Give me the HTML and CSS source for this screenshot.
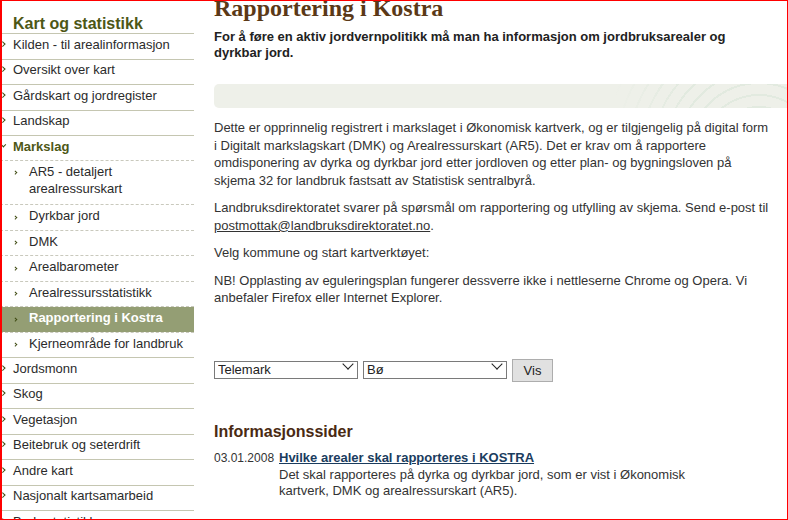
FILE: index.html
```html
<!DOCTYPE html>
<html lang="no">
<head>
<meta charset="utf-8">
<title>Rapportering i Kostra</title>
<link rel="stylesheet" href="styles.css">
</head>
<body>
<div class="page">
  <nav class="side">
    <h2 class="side-title">Kart og statistikk</h2>
    <ul class="menu">
      <li><a href="#">Kilden - til arealinformasjon</a></li>
      <li><a href="#">Oversikt over kart</a></li>
      <li><a href="#">Gårdskart og jordregister</a></li>
      <li><a href="#">Landskap</a></li>
      <li class="open"><a href="#">Markslag</a>
        <ul class="sub">
          <li class="multi"><a href="#">AR5 - detaljert arealressurskart</a></li>
          <li><a href="#">Dyrkbar jord</a></li>
          <li><a href="#">DMK</a></li>
          <li><a href="#">Arealbarometer</a></li>
          <li><a href="#">Arealressursstatistikk</a></li>
          <li class="active"><a href="#">Rapportering i Kostra</a></li>
          <li><a href="#">Kjerneområde for landbruk</a></li>
        </ul>
      </li>
      <li><a href="#">Jordsmonn</a></li>
      <li><a href="#">Skog</a></li>
      <li><a href="#">Vegetasjon</a></li>
      <li><a href="#">Beitebruk og seterdrift</a></li>
      <li><a href="#">Andre kart</a></li>
      <li><a href="#">Nasjonalt kartsamarbeid</a></li>
      <li><a href="#">Bruksstatistikk</a></li>
    </ul>
  </nav>
  <main class="main">
    <h1 class="title">Rapportering i Kostra</h1>
    <p class="lead">For å føre en aktiv jordvernpolitikk må man ha informasjon om jordbruksarealer og dyrkbar jord.</p>
    <div class="banner"></div>
    <p class="text first">Dette er opprinnelig registrert i markslaget i Økonomisk kartverk, og er tilgjengelig på digital form i Digitalt markslagskart (DMK) og Arealressurskart (AR5). Det er krav om å rapportere omdisponering av dyrka og dyrkbar jord etter jordloven og etter plan- og bygningsloven på skjema 32 for landbruk fastsatt av Statistisk sentralbyrå.</p>
    <p class="text">Landbruksdirektoratet svarer på spørsmål om rapportering og utfylling av skjema. Send e-post til <a class="mail" href="#">postmottak@landbruksdirektoratet.no</a>.</p>
    <p class="text">Velg kommune og start kartverktøyet:</p>
    <p class="text">NB! Opplasting av eguleringsplan fungerer dessverre ikke i nettleserne Chrome og Opera. Vi anbefaler Firefox eller Internet Explorer.</p>
    <form class="picker">
      <span class="sel"><select><option>Telemark</option></select></span>
      <span class="sel"><select><option>Bø</option></select></span>
      <button type="button" class="btn">Vis</button>
    </form>
    <h2 class="info">Informasjonssider</h2>
    <div class="news">
      <span class="date">03.01.2008</span>
      <div class="news-body">
        <a class="news-link" href="#">Hvilke arealer skal rapporteres i KOSTRA</a>
        <div class="news-desc">Det skal rapporteres på dyrka og dyrkbar jord, som er vist i Økonomisk kartverk, DMK og arealressurskart (AR5).</div>
      </div>
    </div>
  </main>
</div>
<div class="frame"></div>
</body>
</html>
```
FILE: styles.css
```css
* { box-sizing: border-box; }
html, body { margin: 0; overflow: hidden; background: #fff; }
body {
  font-family: "Liberation Sans", Arial, sans-serif;
  font-size: 13px;
  color: #333;
}
.page { display: flex; gap: 20px; }

/* Sidebar */
.side { width: 194px; flex: none; }
.side-title {
  margin: 14px 0 0;
  padding-left: 13px;
  font-size: 16px;
  line-height: 19px;
  font-weight: bold;
  color: #4d5716;
  border-bottom: 1px solid #c5c6b1;
}
.menu { list-style: none; margin: 0; padding: 0; }
.menu > li { border-bottom: 1px solid #c5c6b1; }
.menu a { color: #2b2b2b; text-decoration: none; }
.menu > li > a {
  display: block;
  position: relative;
  padding: 2.5px 0 6px 13px;
  line-height: 16px;
}
.menu > li > a::before {
  content: "";
  position: absolute;
  left: 0.5px;
  top: 7.7px;
  width: 2.5px;
  height: 2.5px;
  border-top: 1.5px solid #3d4a10;
  border-right: 1.5px solid #3d4a10;
  transform: rotate(45deg);
}
.menu > li.open > a {
  font-weight: bold;
  color: #4d5716;
  padding-bottom: 5px;
}
.menu > li.open > a::before { transform: rotate(135deg); top: 6.5px; left: 2px; }

.sub { list-style: none; margin: 0; padding: 0; border-top: 1px dashed #c9c9bd; }
.sub li { border-bottom: 1px dashed #c9c9bd; }
.sub li:last-child { border-bottom: 0; }
.sub li a {
  display: block;
  position: relative;
  padding: 2px 0 5.5px 29px;
  line-height: 17px;
}
.sub li.multi a { padding-bottom: 7.5px; }
.sub li a::before {
  content: "";
  position: absolute;
  left: 14px;
  top: 10.8px;
  width: 1.5px;
  height: 1.5px;
  border-top: 1.5px solid #3d4a10;
  border-right: 1.5px solid #3d4a10;
  transform: rotate(45deg);
}
.sub li.active a {
  background: #949e74;
  color: #fff;
  font-weight: bold;
}

/* Main */
.main { width: 574px; flex: none; }
.title {
  font-family: "Liberation Serif", "Times New Roman", serif;
  font-size: 24px;
  line-height: 28px;
  font-weight: bold;
  color: #5b3917;
  margin: -6px 0 0;
}
.lead {
  margin: 7px 0 0;
  max-width: 530px;
  font-weight: bold;
  line-height: 15.5px;
  color: #222;
}
.banner {
  height: 24px;
  margin-top: 24px;
  border-radius: 5px 0 0 5px;
  background-color: #eef0e9;
  background-image:
    linear-gradient(to right, #eef0e9 0, #eef0e9 400px, rgba(238, 240, 233, 0) 470px),
    repeating-radial-gradient(circle at 545px 70px, rgba(255, 255, 255, 0) 0 10px, rgba(214, 228, 214, 0.5) 10px 12px);
}
.text {
  margin: 0 0 10px;
  max-width: 558px;
  line-height: 17.55px;
}
.text.first { margin-top: 11px; }
.mail { color: #333; text-decoration: underline; }

.picker {
  display: flex;
  align-items: center;
  gap: 5px;
  margin: 52px 0 0;
}
.sel { position: relative; display: block; }
.sel select {
  appearance: none;
  -webkit-appearance: none;
  display: block;
  width: 144px;
  height: 18px;
  margin: 0;
  padding: 0 0 0 3px;
  border: 1px solid #7a7a7a;
  border-radius: 0;
  background: #fff;
  font-family: "Liberation Sans", Arial, sans-serif;
  font-size: 13px;
  line-height: 16px;
  color: #222;
}
.sel::after {
  content: "";
  position: absolute;
  right: 5.75px;
  top: -1.25px;
  width: 7px;
  height: 7px;
  border-right: 1.5px solid #222;
  border-bottom: 1.5px solid #222;
  transform: rotate(45deg);
  pointer-events: none;
}
.btn {
  width: 41px;
  height: 23px;
  margin: 0;
  padding: 0;
  border: 1px solid #adadad;
  background: #e1e1e1;
  font-family: "Liberation Sans", Arial, sans-serif;
  font-size: 13px;
  color: #222;
}

.info {
  margin: 40px 0 0;
  font-size: 16px;
  line-height: 19px;
  font-weight: bold;
  color: #4a2a12;
}
.news {
  display: grid;
  grid-template-columns: 65px 1fr;
  margin-top: 8px;
}
.date { font-size: 12px; line-height: 18px; color: #333; }
.news-link {
  display: block;
  font-weight: bold;
  line-height: 18px;
  color: #1a3c5e;
  text-decoration: underline;
}
.news-desc { line-height: 16.5px; max-width: 430px; }

.frame {
  position: fixed;
  inset: 0;
  border: 1px solid #ff0000;
  border-left-width: 2px;
  pointer-events: none;
}
```
